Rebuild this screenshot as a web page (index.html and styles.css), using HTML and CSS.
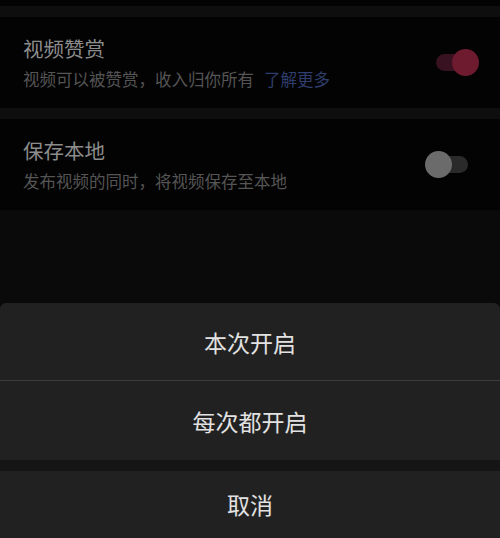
FILE: index.html
```html
<!DOCTYPE html>
<html lang="zh-CN">
<head>
<meta charset="utf-8">
<link rel="stylesheet" href="styles.css">
</head>
<body>
<div class="page">
  <div class="topline"></div>
  <div class="band"></div>
  <div class="row">
    <div class="texts">
      <div class="title">视频赞赏</div>
      <div class="sub">视频可以被赞赏，收入归你所有<span class="link">了解更多</span></div>
    </div>
    <div class="toggle on"><span class="knob"></span></div>
  </div>
  <div class="band"></div>
  <div class="row">
    <div class="texts">
      <div class="title">保存本地</div>
      <div class="sub">发布视频的同时，将视频保存至本地</div>
    </div>
    <div class="toggle off"><span class="knob"></span></div>
  </div>
  <div class="overlay"></div>
  <div class="sheet">
    <div class="item first">本次开启</div>
    <div class="divider"></div>
    <div class="item second">每次都开启</div>
    <div class="gap"></div>
    <div class="item cancel">取消</div>
  </div>
</div>
</body>
</html>
```
FILE: styles.css
```css
html, body {
  margin: 0;
  padding: 0;
  background: #0a0a0a;
}
body {
  font-family: "Noto Sans CJK SC", "Noto Sans", sans-serif;
  width: 500px;
  height: 538px;
  overflow: hidden;
}
.page {
  display: flex;
  flex-direction: column;
  height: 538px;
}
.topline {
  height: 6px;
  background: #030303;
}
.band {
  height: 11px;
  background: #0e0e0e;
}
.row {
  height: 91px;
  background: #030303;
  display: flex;
  justify-content: space-between;
  align-items: center;
  padding: 0 32px 0 23px;
}
.texts {
  display: flex;
  flex-direction: column;
  gap: 4px;
  margin-top: 1px;
}
.title {
  font-size: 20.5px;
  line-height: 28px;
  color: #8c8c8c;
}
.sub {
  font-size: 16.5px;
  line-height: 26px;
  color: #555555;
  white-space: nowrap;
}
.link {
  color: #2f3e6c;
  margin-left: 10px;
}
.toggle {
  position: relative;
  width: 32px;
  height: 17px;
  border-radius: 9px;
}
.toggle.on {
  background: #381220;
}
.toggle.off {
  background: #2a2a2a;
}
.knob {
  position: absolute;
  top: -5px;
  width: 27px;
  height: 27px;
  border-radius: 50%;
}
.toggle.on .knob {
  left: 16px;
  background: #6e1b30;
}
.toggle.off .knob {
  left: -11px;
  background: #6b6b6b;
}
.overlay {
  height: 93px;
  background: #0a0a0a;
}
.sheet {
  flex: 1;
  display: flex;
  flex-direction: column;
  background: #212121;
  border-radius: 6px 6px 0 0;
}
.item {
  display: flex;
  align-items: center;
  justify-content: center;
  font-size: 23px;
  color: #e2e2e2;
}
.item.first {
  height: 77px;
}
.divider {
  height: 1px;
  background: #3c3c3c;
}
.item.second {
  height: 79px;
}
.gap {
  height: 11px;
  background: #151515;
}
.item.cancel {
  flex: 1;
  padding-bottom: 1px;
}
```
